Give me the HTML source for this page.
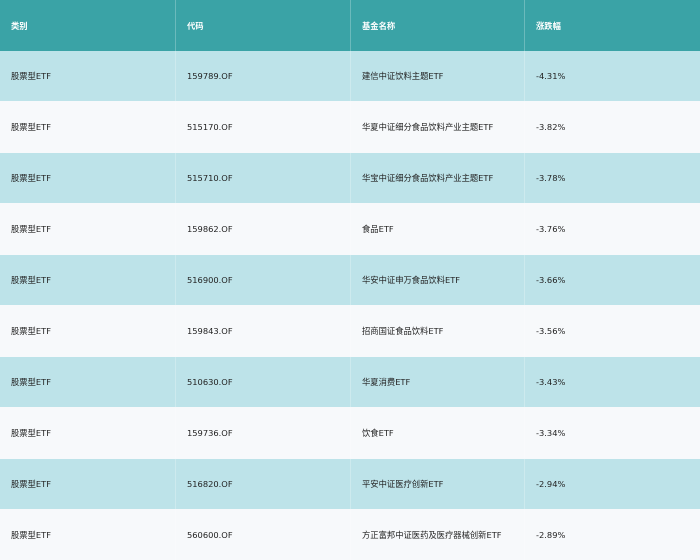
<!DOCTYPE html><html><head><meta charset="utf-8"><style>
body{margin:0;width:700px;height:560px;overflow:hidden;background:#f7f9fb;font-family:"DejaVu Sans","Noto Sans CJK SC",sans-serif;font-size:8.3px;color:#222}
.r{position:absolute;left:0;width:700px;height:50px;display:flex;align-items:center}
.r div{box-sizing:border-box;padding-left:11px;height:100%;display:flex;align-items:center;line-height:10px;border-left:1px solid rgba(255,255,255,.25)}
.r div:first-child{border-left:none}
.c1{width:175px}.c2{width:175px}.c3{width:174px}.c4{width:176px}
.h{background:#3aa3a6;color:#fff;font-weight:bold;height:51px;top:0}
.o{background:#bde3e9}.e{background:#f7f9fb}
</style></head><body>
<div class="r h"><div class="c1">类别</div><div class="c2">代码</div><div class="c3">基金名称</div><div class="c4">涨跌幅</div></div>
<div class="r o" style="top:51px"><div class="c1">股票型ETF</div><div class="c2">159789.OF</div><div class="c3">建信中证饮料主题ETF</div><div class="c4">-4.31%</div></div>
<div class="r e" style="top:102px"><div class="c1">股票型ETF</div><div class="c2">515170.OF</div><div class="c3">华夏中证细分食品饮料产业主题ETF</div><div class="c4">-3.82%</div></div>
<div class="r o" style="top:153px"><div class="c1">股票型ETF</div><div class="c2">515710.OF</div><div class="c3">华宝中证细分食品饮料产业主题ETF</div><div class="c4">-3.78%</div></div>
<div class="r e" style="top:204px"><div class="c1">股票型ETF</div><div class="c2">159862.OF</div><div class="c3">食品ETF</div><div class="c4">-3.76%</div></div>
<div class="r o" style="top:255px"><div class="c1">股票型ETF</div><div class="c2">516900.OF</div><div class="c3">华安中证申万食品饮料ETF</div><div class="c4">-3.66%</div></div>
<div class="r e" style="top:306px"><div class="c1">股票型ETF</div><div class="c2">159843.OF</div><div class="c3">招商国证食品饮料ETF</div><div class="c4">-3.56%</div></div>
<div class="r o" style="top:357px"><div class="c1">股票型ETF</div><div class="c2">510630.OF</div><div class="c3">华夏消费ETF</div><div class="c4">-3.43%</div></div>
<div class="r e" style="top:408px"><div class="c1">股票型ETF</div><div class="c2">159736.OF</div><div class="c3">饮食ETF</div><div class="c4">-3.34%</div></div>
<div class="r o" style="top:459px"><div class="c1">股票型ETF</div><div class="c2">516820.OF</div><div class="c3">平安中证医疗创新ETF</div><div class="c4">-2.94%</div></div>
<div class="r e" style="top:510px"><div class="c1">股票型ETF</div><div class="c2">560600.OF</div><div class="c3">方正富邦中证医药及医疗器械创新ETF</div><div class="c4">-2.89%</div></div>
</body></html>
